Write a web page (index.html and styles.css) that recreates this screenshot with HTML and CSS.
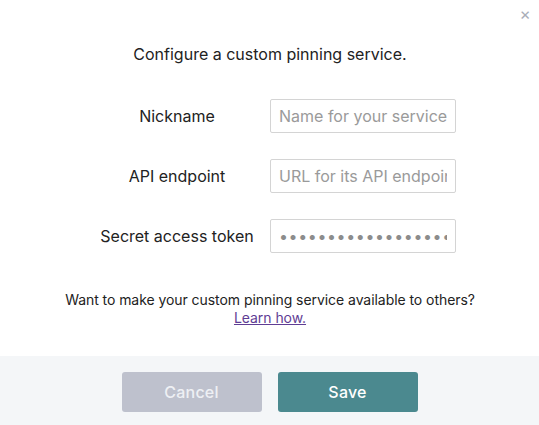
FILE: index.html
```html
<!DOCTYPE html>
<html lang="en">
<head>
<meta charset="utf-8">
<title>Custom pinning service</title>
<link rel="stylesheet" href="styles.css">
</head>
<body>
<div class="dialog">
  <button class="close" aria-label="Close">×</button>
  <div class="body">
    <p class="title">Configure a custom pinning service.</p>
    <div class="form">
      <label class="label" for="nick">Nickname</label>
      <input class="field" id="nick" type="text" placeholder="Name for your service">
      <label class="label" for="api">API endpoint</label>
      <input class="field" id="api" type="text" placeholder="URL for its API endpoint">
      <label class="label" for="key">Secret access token</label>
      <input class="field secret" id="key" type="text" placeholder="•••••••••••••••••••••••••">
    </div>
    <p class="note">Want to make your custom pinning service available to others?<br><a href="#" class="link">Learn how.</a></p>
  </div>
  <div class="footer">
    <button class="btn cancel">Cancel</button>
    <button class="btn save">Save</button>
  </div>
</div>
</body>
</html>
```
FILE: styles.css
```css
html, body {
  margin: 0;
  padding: 0;
  background: #fff;
}
body {
  font-family: Inter, "Noto Sans", sans-serif;
  color: #222;
}
.dialog {
  position: relative;
  width: 539px;
  height: 425px;
  display: flex;
  flex-direction: column;
}
.close {
  position: absolute;
  top: 3px;
  right: 5px;
  width: 18px;
  height: 22px;
  padding: 0;
  border: 0;
  background: none;
  color: #a9aeb8;
  font-family: Inter, sans-serif;
  font-size: 17px;
  line-height: 22px;
  cursor: pointer;
}
.body {
  flex: 1;
  display: flex;
  flex-direction: column;
  align-items: center;
  padding-left: 1px;
}
.title {
  margin: 44px 0 0;
  font-size: 16px;
  line-height: 20px;
}
.form {
  margin-top: 35px;
  display: grid;
  grid-template-columns: 186px 186px;
  row-gap: 26px;
  align-items: center;
}
.label {
  text-align: center;
  font-size: 16px;
  line-height: 20px;
  color: #222;
}
.field {
  box-sizing: border-box;
  width: 186px;
  height: 34px;
  margin: 0;
  padding: 0 8px;
  border: 1px solid #d4d4d4;
  border-radius: 2px;
  font-family: Inter, sans-serif;
  font-size: 16px;
  color: #222;
  outline: none;
}
.field::placeholder {
  color: #9a9a9a;
}
.secret::placeholder {
  color: #8c8c8c;
  letter-spacing: 0.6px;
}
.note {
  margin: 38px 0 0;
  font-size: 14px;
  line-height: 18px;
  letter-spacing: -0.06px;
  text-align: center;
  color: #222;
}
.link {
  color: #5f3d94;
}
.footer {
  height: 69px;
  background: #f4f6f8;
  display: flex;
  justify-content: center;
  align-items: flex-start;
  gap: 16px;
  padding-top: 16px;
  box-sizing: border-box;
}
.btn {
  width: 140px;
  height: 40px;
  border: 0;
  border-radius: 3px;
  font-family: Inter, sans-serif;
  font-size: 16px;
  font-weight: 500;
  letter-spacing: 0.2px;
  color: #fff;
  cursor: pointer;
}
.cancel {
  background: #bec1cd;
  color: #eef0f4;
}
.save {
  background: #4b898f;
}
```
